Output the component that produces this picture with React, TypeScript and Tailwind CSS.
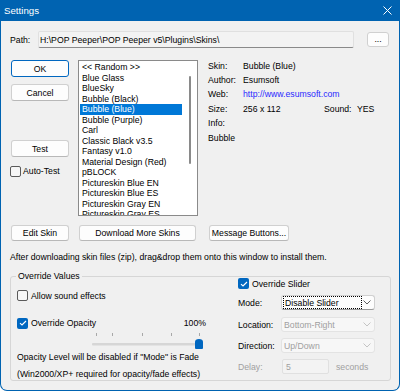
import React from "react";

const skins = [
  "<< Random >>",
  "Blue Glass",
  "BlueSky",
  "Bubble (Black)",
  "Bubble (Blue)",
  "Bubble (Purple)",
  "Carl",
  "Classic Black v3.5",
  "Fantasy v1.0",
  "Material Design (Red)",
  "pBLOCK",
  "Pictureskin Blue EN",
  "Pictureskin Blue ES",
  "Pictureskin Gray EN",
  "Pictureskin Gray ES",
];

function Check({ checked }: { checked?: boolean }) {
  if (checked) {
    return (
      <span className="flex h-[11px] w-[11px] shrink-0 items-center justify-center rounded-[2px] bg-[#0067c0]">
        <svg width="8" height="6" viewBox="0 0 8 6">
          <path d="M1 3.2 L3 5 L7 1" fill="none" stroke="#fff" strokeWidth="1.1" />
        </svg>
      </span>
    );
  }
  return <span className="h-[11px] w-[11px] shrink-0 rounded-[2px] border border-[#5a5a5a] bg-[#f6f6f6]" />;
}

function Chevron({ color = "#606060" }: { color?: string }) {
  return (
    <svg width="8" height="5" viewBox="0 0 8 5">
      <path d="M0.5 0.5 L4 4 L7.5 0.5" fill="none" stroke={color} strokeWidth="1" />
    </svg>
  );
}

function Button({ label, w, primary }: { label: string; w: string; primary?: boolean }) {
  return (
    <div
      className={`${w} flex h-full items-center justify-center rounded-[3px] border bg-[#fdfdfd] ${
        primary ? "border-[#0067c0]" : "border-[#d0d0d0] border-b-[#b8b8b8]"
      }`}
    >
      {label}
    </div>
  );
}

function Select({ value, disabled, focus }: { value: string; disabled?: boolean; focus?: boolean }) {
  return (
    <div
      className={`flex h-[15px] w-[94px] items-center justify-between rounded-[3px] border pl-[1px] pr-[3px] ${
        disabled ? "border-[#e3e3e3] bg-[#f7f7f7] text-[#a0a0a0]" : "border-[#d0d0d0] border-b-[#9a9a9a] bg-[#fdfdfd]"
      }`}
    >
      <span className={`flex h-[13px] items-center px-[1px] ${focus ? "w-[79px] border border-dotted border-black" : ""}`}>
        {value}
      </span>
      <Chevron color={disabled ? "#c4c4c4" : "#606060"} />
    </div>
  );
}

export default function App() {
  return (
    <div className="flex h-[391px] w-[400px] flex-col overflow-hidden font-['Liberation_Sans',Arial,sans-serif] text-[8.7px] leading-[12px] text-black">
      <div className="flex h-[21px] shrink-0 items-center justify-between bg-[#0063b1] pl-[4px] pr-[8px] text-[9.7px] text-white">
        <span>Settings</span>
        <svg width="9" height="9" viewBox="0 0 9 9">
          <path d="M0.5 0.5 L8.5 8.5 M8.5 0.5 L0.5 8.5" stroke="#fff" strokeWidth="1" />
        </svg>
      </div>

      <div className="flex flex-1 flex-col rounded-b-[7px] border-x border-b border-[#0063b1] bg-[#f0f0f0] pl-[9px]">
        {/* path */}
        <div className="mt-[10px] flex h-[17px] items-center">
          <span className="w-[28px]">Path:</span>
          <div className="flex h-[17px] w-[316px] items-center rounded-[2px] border border-[#e0e0e0] border-b-[#8a8a8a] bg-[#f3f3f3] pl-[1px]">
            H:\POP Peeper\POP Peeper v5\Plugins\Skins\
          </div>
          <div className="ml-[13px] flex h-[15px] w-[22px] items-center justify-center rounded-[3px] border border-[#d0d0d0] bg-[#fdfdfd] pb-[2px]">
            ...
          </div>
        </div>

        {/* main */}
        <div className="mt-[12px] flex">
          <div className="ml-[1px] flex w-[58px] flex-col">
            <div className="h-[17px]">
              <Button label="OK" w="w-[58px]" primary />
            </div>
            <div className="mt-[7px] h-[17px]">
              <Button label="Cancel" w="w-[58px]" />
            </div>
            <div className="mt-[39px] h-[17px]">
              <Button label="Test" w="w-[58px]" />
            </div>
            <div className="-ml-[1px] mt-[8px] flex h-[12px] items-center gap-[2px]">
              <Check />
              <span>Auto-Test</span>
            </div>
          </div>

          <div className="relative ml-[9px] h-[156px] w-[120px] overflow-hidden border border-[#8a8a8a] bg-white pl-[1px] pt-[1px]">
            {skins.map((s, i) => (
              <div
                key={s}
                className={`h-[10.5px] w-[102px] pl-[2px] leading-[10.5px] ${i === 4 ? "bg-[#0078d7] text-white" : ""}`}
              >
                {s}
              </div>
            ))}
            <div className="absolute left-[110px] top-[15px] h-[88px] w-[1.5px] rounded-full bg-[#8a8a8a]" />
          </div>

          <div className="-mt-[1.5px] ml-[10px] flex flex-col leading-[14.4px]">
            <div className="flex">
              <span className="w-[35px]">Skin:</span>
              <span>Bubble (Blue)</span>
            </div>
            <div className="flex">
              <span className="w-[35px]">Author:</span>
              <span>Esumsoft</span>
            </div>
            <div className="flex">
              <span className="w-[35px]">Web:</span>
              <span className="text-[#2a2aff]">http://www.esumsoft.com</span>
            </div>
            <div className="flex">
              <span className="w-[35px]">Size:</span>
              <span className="w-[81px]">256 x 112</span>
              <span className="w-[33px]">Sound:</span>
              <span>YES</span>
            </div>
            <span>Info:</span>
            <span>Bubble</span>
          </div>
        </div>

        {/* buttons */}
        <div className="mt-[9px] flex h-[16px]">
          <div className="ml-[1px] h-full">
            <Button label="Edit Skin" w="w-[58px]" />
          </div>
          <div className="ml-[10px] h-full">
            <Button label="Download More Skins" w="w-[117px]" />
          </div>
          <div className="ml-[13px] h-full">
            <Button label="Message Buttons..." w="w-[80px]" />
          </div>
        </div>

        <p className="mt-[9.5px]">After downloading skin files (zip), drag&amp;drop them onto this window to install them.</p>

        {/* override group */}
        <div className="relative mt-[13.5px] flex h-[105px] w-[381px] rounded-[3px] border border-[#d6d6d6]">
          <span className="absolute -top-[7px] left-[5px] bg-[#f0f0f0] px-[2px]">Override Values</span>

          <div className="ml-[6px] flex w-[189px] flex-col">
            <div className="mt-[12.5px] flex h-[12px] items-center gap-[3px]">
              <Check />
              <span>Allow sound effects</span>
            </div>
            <div className="mt-[15.5px] flex h-[12px] items-center gap-[3px]">
              <Check checked />
              <span className="flex-1">Override Opacity</span>
              <span>100%</span>
            </div>
            <svg className="ml-[71px] mt-[1px]" width="120" height="20" viewBox="0 0 120 20">
              {[8, 24, 54, 83, 111].map((x) => (
                <rect key={x} x={x} y="3" width="1" height="3" fill="#a8a8a8" />
              ))}
              <rect x="4" y="13" width="110" height="2.5" rx="1" fill="#d6d6d6" />
              <path d="M107 12 Q107 9 111 9 Q115 9 115 12 L115 18 Q115 19 114 19 L108 19 Q107 19 107 18 Z" fill="#0067c0" />
            </svg>
            <p className="mt-[1px]">Opacity Level will be disabled if "Mode" is Fade</p>
            <p className="mt-[5px]">(Win2000/XP+ required for opacity/fade effects)</p>
          </div>

          <div className="ml-[32px] flex flex-col">
            <div className="mt-[0.5px] flex h-[12px] items-center gap-[3px]">
              <Check checked />
              <span>Override Slider</span>
            </div>
            <div className="mt-[5.5px] flex items-center">
              <span className="w-[43px]">Mode:</span>
              <Select value="Disable Slider" focus />
            </div>
            <div className="mt-[7px] flex items-center">
              <span className="w-[43px]">Location:</span>
              <Select value="Bottom-Right" disabled />
            </div>
            <div className="mt-[6px] flex items-center">
              <span className="w-[43px]">Direction:</span>
              <Select value="Up/Down" disabled />
            </div>
            <div className="mt-[6px] flex items-center text-[#a0a0a0]">
              <span className="w-[44px]">Delay:</span>
              <div className="flex h-[15px] w-[47px] items-center rounded-[2px] border border-[#e0e0e0] bg-[#f3f3f3] pl-[3px]">
                5
              </div>
              <span className="ml-[7px]">seconds</span>
            </div>
          </div>
        </div>
      </div>
    </div>
  );
}
